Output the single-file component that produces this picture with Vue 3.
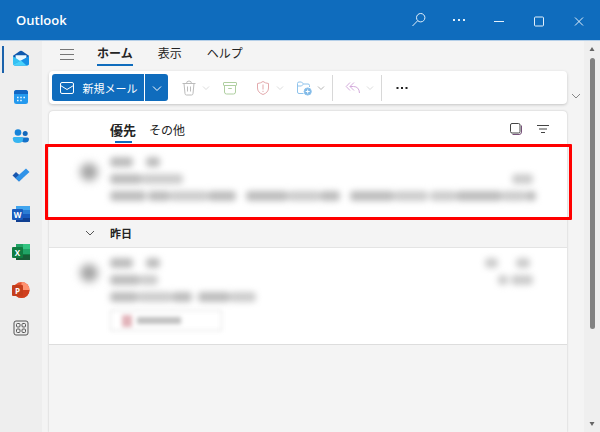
<script setup>
import { ref } from "vue"

const activeApp = ref('mail')
const activeTab = ref('home')
const activeBox = ref('focused')

const mainApps = [
  { id: 'mail', label: 'メール' },
  { id: 'calendar', label: '予定表' },
  { id: 'people', label: '連絡先' },
  { id: 'todo', label: 'To Do' }
]
const officeApps = [
  { id: 'word', label: 'Word', letter: 'W' },
  { id: 'excel', label: 'Excel', letter: 'X' },
  { id: 'powerpoint', label: 'PowerPoint', letter: 'P' },
  { id: 'more', label: 'その他のアプリ' }
]
const tabs = [
  { id: 'home', label: 'ホーム' },
  { id: 'view', label: '表示' },
  { id: 'help', label: 'ヘルプ' }
]

// masked text: width of every piece, negative = empty space
const messages = [
  {
    id: 1,
    marked: true,
    lines: [
      { left: [23, -13, 14], right: [] },
      { left: [32, 41], right: [21] },
      { left: [36, -2, 22, 38, 28, -10, 42, 32, 20, -10, 44, 34, -2, 26, 46, 24, 10], right: [] }
    ]
  },
  {
    id: 2,
    file: true,
    lines: [
      { left: [23, -13, 14], right: [13, -18, 14, -3] },
      { left: [30, 18], right: [10, -3, 22] },
      { left: [28, 34, 20, -6, 32, 26], right: [] }
    ]
  }
]
</script>

<template>
<div class="window">
  <header class="titlebar">
    <h1 class="title">Outlook</h1>
    <button class="win-button" aria-label="検索">
      <svg width="16" height="16" viewBox="0 0 16 16"><circle cx="9.7" cy="5.7" r="4.2" /><path d="M6.6 8.8L1.5 14" /></svg>
    </button>
    <button class="win-button" aria-label="その他">
      <svg width="16" height="16" viewBox="0 0 16 16"><path d="M2 8h2M7 8h2M12 8h2" stroke-width="2" /></svg>
    </button>
    <button class="win-button" aria-label="最小化">
      <svg width="16" height="16" viewBox="0 0 16 16"><path d="M3 9.5h10" /></svg>
    </button>
    <button class="win-button" aria-label="最大化">
      <svg width="16" height="16" viewBox="0 0 16 16"><rect x="3.5" y="5" width="9" height="9" rx="1" /></svg>
    </button>
    <button class="win-button" aria-label="閉じる">
      <svg width="16" height="16" viewBox="0 0 16 16"><path d="M4 5.5l8 8M12 5.5l-8 8" /></svg>
    </button>
  </header>

  <div class="content">
    <nav class="rail">
      <button
        v-for="app in mainApps"
        :key="app.id"
        class="rail-button"
        :class="{ current: activeApp === app.id }"
        :aria-label="app.label"
        @click="activeApp = app.id"
      >
        <svg v-if="app.id === 'mail'" width="18" height="18" viewBox="0 0 18 18">
          <path d="M1 6.8L8 2q1-.6 2 0l7 4.8v3L9 13l-8-3.5z" fill="#0f58ad" />
          <path d="M3.6 6.2h10.8v4.5L9 13l-5.4-2.5z" fill="#e9f8ff" />
          <path d="M1 7.2l8 5.2 8-5.2v7.3q0 2-2 2H3q-2 0-2-2z" fill="#35c1f3" />
          <path d="M1.3 15.5L17 7.2v7.3q0 2-2 2H3q-1.2 0-1.7-1z" fill="#1690e6" />
          <path d="M1.3 15.5L9 11.5l5.5 5H3q-1.2 0-1.7-1z" fill="#49d2fa" />
        </svg>
        <svg v-else-if="app.id === 'calendar'" width="18" height="18" viewBox="0 0 18 18">
          <rect x="2" y="2" width="14" height="14" rx="2.5" fill="#2499ee" />
          <path d="M2 6V4.5Q2 2 4.5 2h9Q16 2 16 4.500V6z" fill="#1266c2" />
          <path d="M5 9.5h1.6M8.2 9.5h1.6M11.4 9.5H13M5 12.5h1.6M8.2 12.5h1.6" stroke="#e5f6ff" stroke-width="1.6" />
        </svg>
        <svg v-else-if="app.id === 'people'" width="18" height="18" viewBox="0 0 18 18">
          <circle cx="6" cy="5.5" r="3.3" fill="#1683d9" />
          <circle cx="13.2" cy="6.5" r="2.5" fill="#1268bc" />
          <path d="M9.5 10.5h6q1.5 0 1.5 1.500 0 3.5-4 3.5-2 0-3-1z" fill="#1471c9" />
          <path d="M2 10h8q1.2 0 1.2 1.5 0 4.5-5.2 4.5T.8 11.5Q.8 10 2 10z" fill="#36b5f1" />
        </svg>
        <svg v-else width="18" height="18" viewBox="0 0 18 18">
          <path d="M.5 9.500L4 6l6.500 6L7 15.500z" fill="#1856ae" />
          <path d="M3.500 12L14 2.500l3.500 3.500L7 15.500z" fill="#3093e8" />
        </svg>
      </button>
      <div class="office">
        <button
          v-for="app in officeApps"
          :key="app.id"
          class="rail-button"
          :aria-label="app.label"
        >
          <svg v-if="app.id === 'powerpoint'" width="18" height="18" viewBox="0 0 18 18">
            <circle cx="9.5" cy="9" r="8" fill="#e2512f" />
            <path d="M9.5 1a8 8 0 0 1 8 8h-8z" fill="#ff9270" />
            <path d="M17.5 9a8 8 0 0 1-16 0z" fill="#d0401f" />
          </svg>
          <svg v-else-if="app.id === 'word'" width="18" height="18" viewBox="0 0 18 18">
            <rect x="4" y="1" width="14" height="16" rx="1" fill="#2b7cd3" />
            <path d="M4 1h14v4H4z" fill="#41a5ee" />
            <path d="M4 9h14v4H4z" fill="#185abd" />
            <path d="M4 13h14v4H4z" fill="#103f91" />
          </svg>
          <svg v-else-if="app.id === 'excel'" width="18" height="18" viewBox="0 0 18 18">
            <rect x="4" y="1" width="14" height="16" rx="1" fill="#107c41" />
            <path d="M4 1h7v5H4z" fill="#21a366" />
            <path d="M11 1h7v5h-7z" fill="#33c481" />
            <path d="M11 6h7v5h-7z" fill="#21a366" />
            <path d="M4 12h14v5H4z" fill="#185c37" />
          </svg>
          <svg v-else width="18" height="18" viewBox="0 0 18 18" fill="none" stroke="#555">
            <rect x="2" y="2" width="14" height="14" rx="2" />
            <rect x="4.5" y="4.5" width="3.500" height="3.500" rx="1" />
            <rect x="10" y="4.5" width="3.500" height="3.500" rx="1" />
            <rect x="4.5" y="10" width="3.500" height="3.500" rx="1" />
            <rect x="10" y="10" width="3.500" height="3.500" rx="1" />
          </svg>
          <span v-if="app.letter" class="letter" :class="app.id">{{ app.letter }}</span>
        </button>
      </div>
    </nav>

    <main class="main">
      <div class="tabs">
        <button class="menu-button" aria-label="メニュー">
          <svg width="16" height="14" viewBox="0 0 16 14"><path d="M1 2.5h14M1 7.5h14M1 12.5h14" /></svg>
        </button>
        <button
          v-for="tab in tabs"
          :key="tab.id"
          class="tab"
          :class="{ selected: activeTab === tab.id }"
          @click="activeTab = tab.id"
        >{{ tab.label }}</button>
      </div>

      <div class="ribbon-row">
        <div class="ribbon">
          <button class="new-mail">
            <svg width="16" height="14" viewBox="0 0 16 14"><rect x="1.5" y="1.5" width="13" height="11" rx="1.5" /><path d="M1.5 4.5L8 8.5l6.5-4" /></svg>
            <span>新規メール</span>
          </button>
          <button class="new-more" aria-label="新規作成のオプション">
            <svg width="10" height="10" viewBox="0 0 10 10"><path d="M1 3.5l4 4 4-4" /></svg>
          </button>
          <button class="tool trash" aria-label="削除">
            <svg width="16" height="16" viewBox="0 0 16 16"><path d="M1.5 3.5h13M5.500 3.5q0-2.500 2.500-2.500t2.500 2.500M3 3.500l1 10q.1 1.500 1.500 1.500h5q1.400 0 1.500-1.500l1-10M6.500 6.500v5M9.500 6.500v5" /></svg>
          </button>
          <button class="arrow" aria-label="削除のオプション">
            <svg width="8" height="8" viewBox="0 0 8 8"><path d="M1 2.5l3 3 3-3" /></svg>
          </button>
          <button class="tool archive" aria-label="アーカイブ">
            <svg width="16" height="16" viewBox="0 0 16 16"><rect x="1.5" y="2.5" width="13" height="3" rx=".5" /><path d="M2.5 5.5V12q0 2 2 2h7q2 0 2-2V5.5M6.2 8.5h3.600" /></svg>
          </button>
          <button class="tool report" aria-label="報告">
            <svg width="16" height="16" viewBox="0 0 16 16"><path d="M8 1.5q2.500 1.800 5.500 2V8q0 4.500-5.500 6.500Q2.500 12.500 2.500 8V3.500q3-.2 5.500-2zM8 4.500v5M8 10.800v1.200" /></svg>
          </button>
          <button class="arrow" aria-label="報告のオプション">
            <svg width="8" height="8" viewBox="0 0 8 8"><path d="M1 2.5l3 3 3-3" /></svg>
          </button>
          <button class="tool move" aria-label="移動">
            <svg width="16" height="16" viewBox="0 0 16 16"><path d="M7.5 13.5H3q-1.500 0-1.500-1.500V3.500Q1.500 2 3 2h2.500L7.500 4H12q1.500 0 1.500 1.500V7M1.500 6H5.500l2-2" /><circle cx="11.7" cy="11.5" r="3.6" fill="#7fb8e6" /><path d="M11.7 9.5v4M9.7 11.5h4" stroke="#fff" /></svg>
          </button>
          <button class="arrow dark" aria-label="移動のオプション">
            <svg width="8" height="8" viewBox="0 0 8 8"><path d="M1 2.5l3 3 3-3" /></svg>
          </button>
          <span class="divider"></span>
          <button class="tool reply" aria-label="全員に返信">
            <svg width="16" height="16" viewBox="0 0 16 16"><path d="M5 2.5L1.2 6.5 5 10.5M9 2.5L5 6.5l4 4M5 6.5h3.5q5.500 0 6 6.500" /></svg>
          </button>
          <button class="arrow" aria-label="返信のオプション">
            <svg width="8" height="8" viewBox="0 0 8 8"><path d="M1 2.5l3 3 3-3" /></svg>
          </button>
          <span class="divider"></span>
          <button class="tool dots" aria-label="その他のコマンド">
            <svg width="16" height="16" viewBox="0 0 16 16"><path d="M2.5 8h2M7 8h2M11.5 8h2" /></svg>
          </button>
        </div>
        <button class="ribbon-toggle" aria-label="リボンの表示">
          <svg width="10" height="10" viewBox="0 0 10 10"><path d="M1 3l4 4 4-4" /></svg>
        </button>
      </div>

      <section class="list">
        <div class="list-head">
          <button class="box" :class="{ selected: activeBox === 'focused' }" @click="activeBox = 'focused'">優先</button>
          <button class="box" :class="{ selected: activeBox === 'other' }" @click="activeBox = 'other'">その他</button>
          <button class="list-tool first" aria-label="選択">
            <svg width="14" height="14" viewBox="0 0 14 14"><rect x="1.5" y="1.5" width="9.5" height="9.5" rx="1.5" /><path d="M12.5 3.5V10q0 2.500-2.500 2.500H3.500" stroke="#77517a" /></svg>
          </button>
          <button class="list-tool" aria-label="フィルター">
            <svg width="14" height="14" viewBox="0 0 14 14"><path d="M1 3.5h12M3 7h8M5 10.5h4" /></svg>
          </button>
        </div>

        <template v-for="mail in messages" :key="mail.id">
          <button v-if="mail.id === 2" class="day">
            <svg width="10" height="10" viewBox="0 0 10 10"><path d="M1 3l4 4 4-4" /></svg>
            <span>昨日</span>
          </button>
          <article class="mail" :class="{ marked: mail.marked }">
            <span class="avatar"></span>
            <div class="mail-body">
              <div v-for="(line, i) in mail.lines" :key="i" class="line">
                <span
                  v-for="(w, k) in line.left"
                  :key="k"
                  :class="{ piece: w > 0, light: k % 2 === 1 }"
                  :style="{ width: Math.abs(w) + 'px' }"
                ></span>
                <span class="space"></span>
                <span
                  v-for="(w, k) in line.right"
                  :key="'r' + k"
                  :class="{ piece: w > 0, light: true }"
                  :style="{ width: Math.abs(w) + 'px' }"
                ></span>
              </div>
              <div v-if="mail.file" class="file">
                <span class="file-icon"></span>
                <span class="file-name"></span>
              </div>
            </div>
          </article>
        </template>
        <div class="empty"></div>
      </section>
    </main>

    <div class="scroll">
      <svg width="6" height="6" viewBox="0 0 6 6"><path d="M3 1l2.5 4h-5z" /></svg>
      <div class="track">
        <div class="thumb"></div>
      </div>
      <svg width="6" height="6" viewBox="0 0 6 6"><path d="M3 5L.5 1h5z" /></svg>
    </div>
  </div>
</div>
</template>

<style>
body {
  margin: 0;
}
</style>

<style scoped>
.window {
  display: flex;
  flex-direction: column;
  min-height: 100vh;
  background-color: #f4f4f4;
  color: #242424;
  font-family: "Noto Sans CJK JP", sans-serif;
  font-size: 12px;
}
button {
  display: flex;
  align-items: center;
  justify-content: center;
  border: 0;
  padding: 0;
  background: none;
  color: inherit;
  font: inherit;
  cursor: pointer;
}
.titlebar {
  display: flex;
  height: 40px;
  padding: 0 1px 0 16px;
  background-color: #0f6cbd;
  border-bottom: 1px solid #b5cfe8;
}
.title {
  flex: 1;
  margin: 0;
  color: white;
  font-family: "Open Sans", sans-serif;
  font-size: 13px;
  font-weight: 600;
  line-height: 40px;
}
.win-button {
  width: 40px;
}
.win-button svg {
  fill: none;
  stroke: #e3f0fb;
}
.content {
  flex: 1;
  display: flex;
}
.rail {
  display: flex;
  flex-direction: column;
  gap: 5px;
  width: 42px;
  background-color: #eeeeee;
}
.office {
  display: flex;
  flex-direction: column;
  gap: 4px;
}
.rail-button {
  position: relative;
  width: 42px;
  height: 34px;
}
.rail-button.current::before {
  content: "";
  position: absolute;
  left: 2px;
  top: 5px;
  bottom: 2px;
  width: 2px;
  background-color: #1b62ab;
}
.letter {
  position: absolute;
  left: 12px;
  top: 12px;
  width: 11px;
  height: 11px;
  border-radius: 1px;
  color: white;
  font-family: "Open Sans", sans-serif;
  font-size: 8px;
  font-weight: bold;
  line-height: 11px;
}
.word {
  background-color: #185abd;
}
.excel {
  background-color: #107c41;
}
.powerpoint {
  background-color: #c43e1c;
}
.main {
  flex: 1;
  display: flex;
  flex-direction: column;
  min-width: 0;
  padding-left: 7px;
}
.tabs {
  display: flex;
  gap: 25px;
  height: 25px;
  margin-bottom: 5px;
  padding-left: 10px;
}
.menu-button {
  width: 16px;
  margin-right: -3px;
}
.menu-button svg {
  fill: none;
  stroke: #777777;
}
.tab {
  border-bottom: 2px solid transparent;
}
.tab.selected {
  border-bottom-color: #0f6cbd;
  font-weight: bold;
}
.ribbon-row {
  display: flex;
}
.ribbon {
  flex: 1;
  display: flex;
  align-items: center;
  box-sizing: border-box;
  height: 33px;
  padding-left: 3px;
  border-radius: 4px;
  background-color: white;
  box-shadow: 0 1px 3px #c4c4c4;
}
.new-mail {
  gap: 8px;
  width: 92px;
  height: 27px;
  border-radius: 3px 0 0 3px;
  background-color: #0f6cbd;
  color: white;
  font-size: 11px;
}
.new-more {
  width: 23px;
  height: 27px;
  margin-left: 1px;
  border-radius: 0 3px 3px 0;
  background-color: #0f6cbd;
  color: white;
}
.ribbon svg {
  fill: none;
  stroke: currentColor;
}
.tool {
  width: 24px;
  height: 26px;
}
.arrow {
  width: 10px;
  height: 26px;
  color: #dddddd;
}
.arrow.dark {
  color: #b5b5b5;
}
.trash {
  margin-left: 9px;
  color: #bcbcbc;
}
.archive {
  margin-left: 7px;
  color: #afcfa0;
}
.report {
  margin-left: 9px;
  color: #e3a9ac;
}
.move {
  margin-left: 7px;
  color: #8fc3ec;
}
.divider {
  width: 1px;
  height: 26px;
  margin-left: 6px;
  background-color: #d8d8d8;
}
.reply {
  margin-left: 8px;
  color: #d4abdc;
}
.dots {
  margin-left: 8px;
  color: #222222;
}
.dots svg {
  stroke-width: 2;
}
.ribbon-toggle {
  width: 17px;
  padding-top: 16px;
}
.ribbon-toggle svg {
  fill: none;
  stroke: #888888;
}
.list {
  flex: 1;
  display: flex;
  flex-direction: column;
  margin: 7px 17px 0 0;
  border-radius: 4px 4px 0 0;
  background-color: white;
  box-shadow: 0 0 2px #bbbbbb;
}
.list-head {
  display: flex;
  align-items: center;
  gap: 13px;
  height: 36px;
  padding: 0 17px 0 61px;
}
.box {
  position: relative;
  height: 28px;
}
.box.selected {
  font-size: 13px;
  font-weight: bold;
}
.box.selected::after {
  content: "";
  position: absolute;
  left: 5px;
  right: 4px;
  bottom: 0;
  height: 2px;
  background-color: #0f6cbd;
}
.list-tool svg {
  fill: none;
  stroke: #444444;
}
.list-tool.first {
  margin-left: auto;
}
.day {
  gap: 15px;
  justify-content: flex-start;
  height: 31px;
  padding-left: 36px;
  border-top: 1px solid #e4e4e4;
  border-bottom: 1px solid #e4e4e4;
  background-color: #f4f4f4;
  font-size: 11px;
  font-weight: bold;
}
.day svg {
  fill: none;
  stroke: #555555;
}
.mail {
  position: relative;
  display: flex;
  gap: 12px;
  padding: 6px 34px 13px 31px;
}
.mail.marked::after {
  content: "";
  position: absolute;
  inset: -3px -5px -3px -4px;
  border: 3px solid #ff0000;
  border-radius: 1px;
}
.avatar {
  width: 18px;
  height: 18px;
  margin-top: 10px;
  border-radius: 50%;
  background-color: #a4a4a4;
  filter: blur(4px);
}
.mail-body {
  flex: 1;
  min-width: 0;
}
.line {
  display: flex;
  align-items: center;
  height: 17px;
  filter: blur(3px);
}
.line span {
  flex-shrink: 0;
}
.line .space {
  flex: 1;
}
.piece {
  height: 10px;
  border-radius: 4px;
  background-color: #bcbcbc;
}
.piece.light {
  background-color: #cccccc;
}
.file {
  display: flex;
  align-items: center;
  gap: 5px;
  box-sizing: border-box;
  width: 112px;
  height: 21px;
  margin-top: 5px;
  padding-left: 11px;
  border: 1px solid #dddddd;
  filter: blur(2px);
}
.file-icon {
  width: 10px;
  height: 12px;
  background-color: #e2b4ba;
}
.file-name {
  width: 44px;
  height: 7px;
  background-color: #bfbfbf;
}
.empty {
  flex: 1;
  border-top: 1px solid #dddddd;
  background-color: #f4f4f4;
}
.scroll {
  display: flex;
  flex-direction: column;
  align-items: center;
  gap: 6px;
  box-sizing: border-box;
  width: 16px;
  padding: 5px 0;
  background-color: #efefef;
}
.scroll svg {
  fill: #666666;
}
.track {
  flex: 1;
  width: 5px;
}
.thumb {
  height: 76%;
  border-radius: 3px;
  background-color: #828282;
}
</style>
